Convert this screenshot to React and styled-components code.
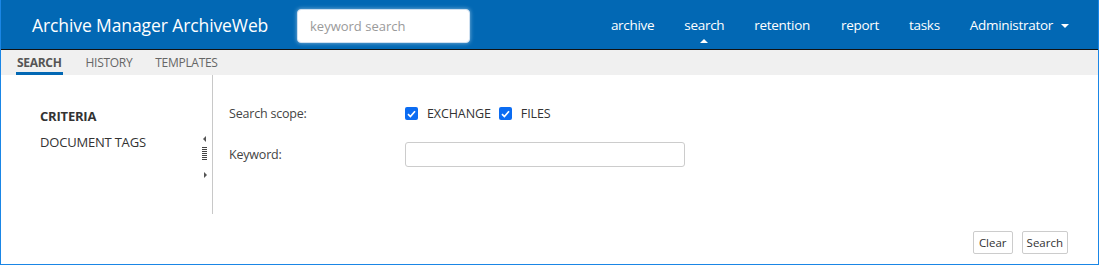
import styled, { createGlobalStyle } from "styled-components";

const GlobalStyle = createGlobalStyle`
  html, body {
    margin: 0;
    padding: 0;
    background: #fff;
  }
  body {
    font-family: "Open Sans", "Noto Sans", sans-serif;
  }
  * {
    box-sizing: border-box;
  }
`;

const Page = styled.div`
  width: 1099px;
  height: 265px;
  display: flex;
  flex-direction: column;
  border: 1px solid #1a86e6;
  border-top: none;
  overflow: hidden;
`;

const Header = styled.header`
  height: 50px;
  flex-shrink: 0;
  display: flex;
  align-items: center;
  background: #0268b4;
  border-bottom: 1px solid #111;
  padding-left: 32px;
  margin: 0 -1px;
`;

const Brand = styled.div`
  color: #fff;
  font-size: 17.5px;
  letter-spacing: -0.1px;
  width: 265px;
`;

const SearchBox = styled.input`
  width: 173px;
  height: 34px;
  border: 1px solid #cfe0f0;
  border-radius: 4px;
  box-shadow: 0 0 4px rgba(255, 255, 255, 0.5);
  padding: 0 12px;
  font-family: inherit;
  font-size: 13px;
  outline: none;
  margin-top: 2px;

  &::placeholder {
    color: #9a9a9a;
  }
`;

const Nav = styled.nav`
  margin-left: auto;
  display: flex;
  align-items: center;
  height: 100%;
  padding-right: 30px;
`;

const NavItem = styled.a`
  position: relative;
  color: #fff;
  font-size: 13.5px;
  letter-spacing: -0.3px;
  margin-left: ${(p) => p.gap}px;
  cursor: pointer;
  display: flex;
  align-items: center;

  ${(p) =>
    p.active &&
    `
    &::after {
      content: "";
      position: absolute;
      left: 50%;
      bottom: -9px;
      transform: translateX(-50%);
      border-left: 4px solid transparent;
      border-right: 4px solid transparent;
      border-bottom: 4px solid #fff;
    }
  `}
`;

const Caret = styled.span`
  display: inline-block;
  margin-left: 8px;
  margin-top: 2px;
  border-left: 4px solid transparent;
  border-right: 4px solid transparent;
  border-top: 4px solid #fff;
`;

const TabBar = styled.div`
  height: 25px;
  flex-shrink: 0;
  display: flex;
  background: #f0f0f0;
  padding-left: 15px;
`;

const Tab = styled.div`
  font-size: 12px;
  letter-spacing: -0.3px;
  color: ${(p) => (p.active ? "#555" : "#666")};
  font-weight: ${(p) => (p.active ? 700 : 400)};
  padding: 4px ${(p) => (p.active ? 1 : 0)}px 0;
  margin-right: 23px;
  height: 100%;
  border-bottom: 3px solid ${(p) => (p.active ? "#0268b4" : "transparent")};
`;

const Main = styled.div`
  flex: 1;
  display: flex;
  flex-direction: column;
`;

const Body = styled.div`
  height: 139px;
  display: flex;
`;

const Sidebar = styled.div`
  width: 212px;
  display: flex;
  border-right: 1px solid #c8c8c8;
`;

const SideNav = styled.ul`
  list-style: none;
  margin: 0;
  padding: 32px 0 0 39px;
  flex: 1;
`;

const SideItem = styled.li`
  font-size: 13px;
  letter-spacing: -0.2px;
  color: #333;
  font-weight: ${(p) => (p.active ? 700 : 400)};
  height: 26px;
  line-height: 18px;
`;

const Handle = styled.div`
  width: 10px;
  display: flex;
  flex-direction: column;
  align-items: flex-start;
  padding-top: 61px;
  gap: 4px;
`;

const Arrow = styled.span`
  width: 0;
  height: 0;
  border-top: 3px solid transparent;
  border-bottom: 3px solid transparent;
  ${(p) =>
    p.dir === "left"
      ? "border-right: 3px solid #555; margin-left: 1px;"
      : "border-left: 3px solid #555; margin-left: 2px;"}
`;

const Grip = styled.div`
  width: 5px;
  height: 14px;
  margin: 1px 0 7px 0;
  background: repeating-linear-gradient(
    to bottom,
    #444 0,
    #444 1px,
    transparent 1px,
    transparent 2px
  );
`;

const Form = styled.div`
  flex: 1;
  padding: 26px 0 0 16px;
  display: flex;
  flex-direction: column;
`;

const Row = styled.div`
  display: flex;
  align-items: center;
  height: ${(p) => p.h}px;
`;

const Label = styled.label`
  width: 176px;
  font-size: 12.5px;
  letter-spacing: -0.2px;
  color: #444;
`;

const CheckGroup = styled.label`
  display: flex;
  align-items: center;
  margin-right: 8px;
  font-size: 12.5px;
  letter-spacing: -0.1px;
  color: #333;
`;

const Box = styled.span`
  width: 13px;
  height: 13px;
  border-radius: 2px;
  background: #0b6cf2;
  display: flex;
  align-items: center;
  justify-content: center;
  margin-right: 9px;
  margin-top: 1px;
`;

const TextField = styled.input`
  width: 280px;
  height: 25px;
  border: 1px solid #ccc;
  border-radius: 3px;
  outline: none;
`;

const Footer = styled.div`
  flex: 1;
  display: flex;
  justify-content: flex-end;
  align-items: flex-start;
  padding: 17px 30px 0 0;
  gap: 9px;
`;

const Button = styled.button`
  height: 23px;
  padding: 0 ${(p) => p.px}px;
  background: #fff;
  border: 1px solid #ccc;
  border-radius: 2px;
  font-family: inherit;
  font-size: 11.5px;
  color: #333;
  cursor: pointer;
`;

const Check = () => (
  <svg width="9" height="8" viewBox="0 0 9 8">
    <path d="M1 4.2 L3.4 6.5 L8 1.3" fill="none" stroke="#fff" strokeWidth="1.7" />
  </svg>
);

const App = () => {
  return (
    <>
      <GlobalStyle />
      <Page>
        <Header>
          <Brand>Archive Manager ArchiveWeb</Brand>
          <SearchBox placeholder="keyword search" />
          <Nav>
            <NavItem gap={0}>archive</NavItem>
            <NavItem gap={30} active>
              search
            </NavItem>
            <NavItem gap={30}>retention</NavItem>
            <NavItem gap={31}>report</NavItem>
            <NavItem gap={30}>tasks</NavItem>
            <NavItem gap={30}>
              Administrator
              <Caret />
            </NavItem>
          </Nav>
        </Header>
        <TabBar>
          <Tab active>SEARCH</Tab>
          <Tab>HISTORY</Tab>
          <Tab>TEMPLATES</Tab>
        </TabBar>
        <Main>
          <Body>
            <Sidebar>
              <SideNav>
                <SideItem active>CRITERIA</SideItem>
                <SideItem>DOCUMENT TAGS</SideItem>
              </SideNav>
              <Handle>
                <Arrow dir="left" />
                <Grip />
                <Arrow dir="right" />
              </Handle>
            </Sidebar>
            <Form>
              <Row h={24}>
                <Label>Search scope:</Label>
                <CheckGroup>
                  <Box>
                    <Check />
                  </Box>
                  EXCHANGE
                </CheckGroup>
                <CheckGroup>
                  <Box>
                    <Check />
                  </Box>
                  FILES
                </CheckGroup>
              </Row>
              <Row h={17} />
              <Row h={24}>
                <Label>Keyword:</Label>
                <TextField />
              </Row>
            </Form>
          </Body>
          <Footer>
            <Button px={5}>Clear</Button>
            <Button px={4}>Search</Button>
          </Footer>
        </Main>
      </Page>
    </>
  );
};

export default App;
